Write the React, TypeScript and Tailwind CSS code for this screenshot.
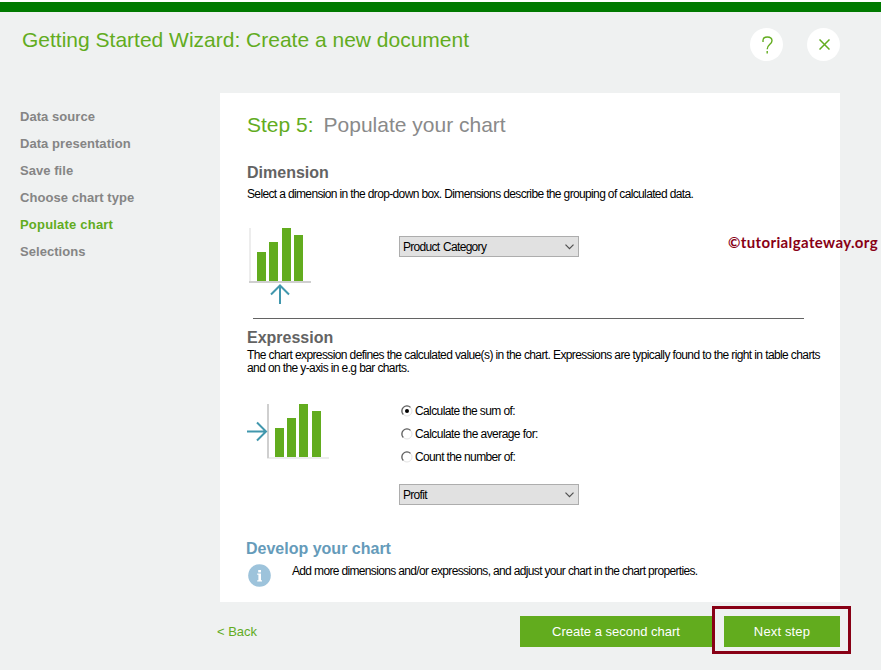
import React, { useState } from "react";

const steps = [
  "Data source",
  "Data presentation",
  "Save file",
  "Choose chart type",
  "Populate chart",
  "Selections"
];

const aggregations = [
  { value: "sum", label: "Calculate the sum of:", tracking: "tracking-[-0.61px]" },
  { value: "avg", label: "Calculate the average for:", tracking: "tracking-[-0.56px]" },
  { value: "count", label: "Count the number of:", tracking: "tracking-[-0.63px]" }
];

const DimensionIcon = () => (
  <svg className="block w-[64px] h-[78px]" viewBox="0 0 64 78" shapeRendering="crispEdges">
    <rect x="0" y="1" width="2" height="54" fill="#ededed" />
    <rect x="0" y="54" width="62" height="2" fill="#cfcfcf" />
    <rect x="8" y="25" width="9" height="29" fill="#62ac1e" />
    <rect x="20" y="15" width="9" height="39" fill="#62ac1e" />
    <rect x="33" y="1" width="9" height="53" fill="#62ac1e" />
    <rect x="45" y="8" width="9" height="46" fill="#62ac1e" />
    <path d="M31 77V59M22 67.5L31 58.5L40 67.5" fill="none" stroke="#4197ad" strokeWidth="2" shapeRendering="auto" />
  </svg>
);

const ExpressionIcon = () => (
  <svg className="block w-[82px] h-[56px]" viewBox="0 0 82 56" shapeRendering="crispEdges">
    <rect x="20" y="53" width="62" height="2" fill="#ededed" />
    <rect x="20" y="0" width="2" height="54" fill="#cfcfcf" />
    <rect x="28" y="24" width="9" height="29" fill="#62ac1e" />
    <rect x="40" y="14" width="9" height="39" fill="#62ac1e" />
    <rect x="52" y="0" width="9" height="53" fill="#62ac1e" />
    <rect x="65" y="7" width="9" height="46" fill="#62ac1e" />
    <path d="M0 27.5H18M10 18.5L19 27.5L10 36.5" fill="none" stroke="#4197ad" strokeWidth="2" shapeRendering="auto" />
  </svg>
);

const SelectBox = ({ value }: { value: string }) => (
  <button className="flex items-center justify-between w-[180px] h-[21px] pl-[3px] pr-[4px] bg-[#e1e1e1] border border-[#adadad] text-[12px] leading-[19px] tracking-[-0.7px] text-black">
    <span className="pt-[2px] [word-spacing:1px]">{value}</span>
    <svg className="w-[9px] h-[6px]" viewBox="0 0 9 6" fill="none" stroke="#505050" strokeWidth="1.2">
      <path d="M0.5 0.7L4.5 4.7L8.5 0.7" />
    </svg>
  </button>
);

const Radio = ({ checked }: { checked: boolean }) => (
  <svg className="block w-[12px] h-[12px]" viewBox="0 0 12 12" fill="none">
    <circle cx="6" cy="6" r="5" stroke="#e3e3e3" />
    <path d="M2.3 9.5A5 5 0 0 1 9.5 2.4" stroke="#606060" strokeWidth="1.3" />
    {checked && <circle cx="6" cy="6" r="2" fill="#000" />}
  </svg>
);

const App = () => {
  const [current] = useState("Populate chart");
  const [aggregation, setAggregation] = useState("sum");

  return (
    <div className="relative flex flex-col w-[881px] h-[670px] overflow-hidden bg-[#eff1f1] font-['Liberation_Sans',Arial,sans-serif]">
      <div className="h-3 shrink-0 border-t-2 border-white bg-[#007a00]" />

      {/* Header */}
      <header className="flex h-[81px] shrink-0 justify-between pl-[22px] pr-[41px]">
        <h1 className="pt-[16px] text-[21px] leading-[24px] text-[#62ac1e]">
          Getting Started Wizard: Create a new document
        </h1>
        <div className="flex gap-6 pt-4">
          <button className="flex items-center justify-center w-[33px] h-[33px] pl-[2px] pt-px rounded-full bg-white">
            <svg className="w-[11px] h-[18px]" viewBox="0 0 11 18" fill="none" stroke="#62ac1e" strokeWidth="1.4">
              <path d="M1 6V4.5C1 2.3 2.8 1 5.3 1C8 1 10 2.3 10 4.8C10 8.4 5.2 8.4 5.2 13.2M5.2 15V17.6" />
            </svg>
          </button>
          <button className="flex items-center justify-center w-[33px] h-[33px] pl-px pb-px rounded-full bg-white">
            <svg className="w-[11px] h-[11px]" viewBox="0 0 11 11" stroke="#62ac1e" strokeWidth="1.5">
              <path d="M0.5 0.5L10.5 10.5M10.5 0.5L0.5 10.5" />
            </svg>
          </button>
        </div>
      </header>

      <div className="flex h-[509px] shrink-0">
        {/* Wizard steps */}
        <nav className="flex w-[220px] shrink-0 flex-col pl-5 pt-[10px]">
          {steps.map((step) => (
            <span
              key={step}
              className={`h-[27px] text-[13px] font-bold leading-[27px] ${
                step === current ? "text-[#62ac1e] tracking-[0.2px]" : "text-[#858585] tracking-[0.05px]"
              }`}
            >
              {step}
            </span>
          ))}
        </nav>

        <main className="w-[620px] bg-white pl-[27px]">
          <h2 className="flex gap-[10px] pt-[20px] text-[21px] leading-[24px]">
            <span className="text-[#62ac1e]">Step 5:</span>
            <span className="text-[#8a8a8a]">Populate your chart</span>
          </h2>

          {/* Dimension */}
          <section className="h-[188px] pt-[26px]">
            <h3 className="h-[20px] text-[16px] font-bold leading-[20px] text-[#636363]">Dimension</h3>
            <p className="pt-[5px] text-[12px] leading-[13px] tracking-[-0.64px] text-black whitespace-nowrap">
              Select a dimension in the drop-down box. Dimensions describe the grouping of calculated data.
            </p>
            <div className="flex pl-[2px] pt-[26px]">
              <DimensionIcon />
              <div className="pl-[86px] pt-[9px]">
                <SelectBox value="Product Category" />
              </div>
            </div>
          </section>
          <div className="ml-[6px] mt-[-7px] w-[551px] border-t border-[#636363]" />

          {/* Expression */}
          <section className="h-[220px] pt-[9px]">
            <h3 className="h-[20px] text-[16px] font-bold leading-[20px] text-[#636363]">Expression</h3>
            <p className="pt-px text-[12px] leading-[13px] tracking-[-0.61px] text-black whitespace-nowrap">
              The chart expression defines the calculated value(s) in the chart. Expressions are typically found to the right in table charts
              <br />
              and on the y-axis in e.g bar charts.
            </p>
            <div className="flex pt-[29px]">
              <ExpressionIcon />
              <div className="flex flex-col pl-[70px] pt-px">
                {aggregations.map((item) => (
                  <button
                    key={item.value}
                    onClick={() => setAggregation(item.value)}
                    className="flex h-[23px] items-start gap-[2px] pl-[2px]"
                  >
                    <Radio checked={aggregation === item.value} />
                    <span className={`text-[12px] leading-[13px] text-black ${item.tracking}`}>{item.label}</span>
                  </button>
                ))}
                <div className="pt-[10px]">
                  <SelectBox value="Profit" />
                </div>
              </div>
            </div>
          </section>

          {/* Hint */}
          <section className="ml-[-1px]">
            <h3 className="h-[20px] text-[16px] font-bold leading-[20px] text-[#659bba]">Develop your chart</h3>
            <div className="flex pl-[2px] pt-[6px]">
              <svg className="mt-[-1px] w-[23px] h-[23px]" viewBox="0 0 23 23">
                <circle cx="11.5" cy="11.5" r="11.3" fill="#9dc3db" />
                <rect x="10.2" y="6" width="2.8" height="2.4" fill="#fff" />
                <path d="M9.2 9.5H13V16.2H14V17.4H9.2V16.2H10.4V10.7H9.2Z" fill="#fff" />
              </svg>
              <p className="pl-[21px] text-[12px] leading-[13px] tracking-[-0.66px] text-black whitespace-nowrap">
                Add more dimensions and/or expressions, and adjust your chart in the chart properties.
              </p>
            </div>
          </section>
        </main>
      </div>

      {/* Footer */}
      <footer className="flex justify-between pl-[217px] pr-[41px] pt-[14px] text-[13px] leading-[31px]">
        <button className="text-[#62ac1e]">&lt; Back</button>
        <div className="flex gap-3">
          <button className="w-[192px] h-[31px] bg-[#62ac1e] text-white">Create a second chart</button>
          <button className="w-[116px] h-[31px] bg-[#62ac1e] text-white tracking-[0.15px]">Next step</button>
        </div>
      </footer>

      {/* Annotations laid over the dialog */}
      <div className="absolute left-[712px] top-[606px] w-[139px] h-[48px] border-3 border-[#880015]" />
      <span className="absolute left-[728px] top-[233px] font-['Lato',sans-serif] text-[15px] font-bold leading-[18px] tracking-[0.38px] text-[#880015] whitespace-nowrap">
        ©tutorialgateway.org
      </span>
    </div>
  );
};

export default App;
